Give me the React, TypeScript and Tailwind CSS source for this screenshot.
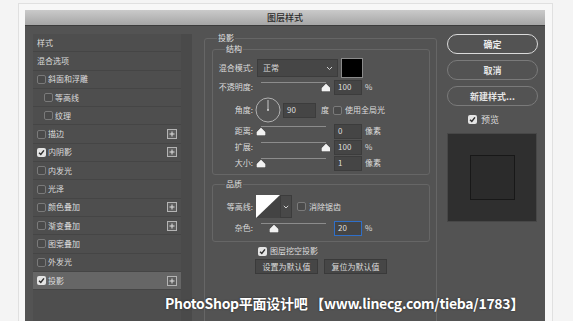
const font = { fontFamily: '"Noto Sans CJK SC", "Noto Sans", sans-serif' };

function Check({ on }: { on?: boolean }) {
  if (on) {
    return (
      <span className="w-[9px] h-[9px] rounded-[2px] bg-[#e4e4e4] flex items-center justify-center shrink-0">
        <svg width="7" height="7" viewBox="0 0 8 8">
          <path d="M1.2 4.2 L3.2 6.2 L6.8 1.6" stroke="#2e2e2e" strokeWidth="1.7" fill="none" />
        </svg>
      </span>
    );
  }
  return <span className="w-[9px] h-[9px] rounded-[2px] border border-[#7a7a7a] bg-[#4a4a4a] shrink-0" />;
}

function PlusBox() {
  return (
    <svg width="10" height="10" viewBox="0 0 10 10" className="shrink-0">
      <rect x="0.5" y="0.5" width="9" height="9" fill="#5e5e5e" stroke="#b4b4b4" />
      <path d="M5 2.5 V7.5 M2.5 5 H7.5" stroke="#e0e0e0" strokeWidth="1" />
    </svg>
  );
}

const layers: { name: string; check?: boolean; on?: boolean; sub?: boolean; plus?: boolean; sel?: boolean }[] = [
  { name: "样式" },
  { name: "混合选项" },
  { name: "斜面和浮雕", check: true },
  { name: "等高线", check: true, sub: true },
  { name: "纹理", check: true, sub: true },
  { name: "描边", check: true, plus: true },
  { name: "内阴影", check: true, on: true, plus: true },
  { name: "内发光", check: true },
  { name: "光泽", check: true },
  { name: "颜色叠加", check: true, plus: true },
  { name: "渐变叠加", check: true, plus: true },
  { name: "图案叠加", check: true },
  { name: "外发光", check: true },
  { name: "投影", check: true, on: true, plus: true, sel: true },
];

function Slider({ pos }: { pos: number }) {
  const cx = 5 + pos * 65;
  return (
    <svg width="74" height="16" viewBox="0 0 74 16" className="shrink-0 ml-[3px]">
      <line x1="5" y1="3.5" x2="70" y2="3.5" stroke="#8c8c8c" strokeWidth="1" />
      <path
        d={`M${cx - 4} 12 L${cx - 4} 9 L${cx} 5 L${cx + 4} 9 L${cx + 4} 12 Z`}
        fill="#f2f2f2"
        stroke="#f2f2f2"
        strokeWidth="0.6"
        strokeLinejoin="round"
      />
    </svg>
  );
}

function Num({ v, w = "w-[28px]", focus }: { v: string; w?: string; focus?: boolean }) {
  return (
    <div
      className={`${w} h-[15px] bg-[#454545] border ${
        focus ? "border-[#2f6fc9]" : "border-[#3c3c3c]"
      } flex items-center pl-[3px] text-[8px] text-[#dedede] shrink-0`}
    >
      {v}
    </div>
  );
}

function Label({ t }: { t: string }) {
  return <div className="w-[40px] text-right shrink-0">{t}</div>;
}

export default function App() {
  return (
    <div className="w-[573px] h-[321px] bg-[#f4f4f4] overflow-hidden relative" style={font}>
      <div className="ml-[18px] mt-[3px] w-[535px] h-[330px] border border-[#e0e0e0] bg-[#f7f7f7] pl-[6px] pt-[6px]">
        <div className="w-[520px]">
          {/* title bar */}
          <div className="h-[16px] bg-gradient-to-b from-[#cacaca] to-[#a6a6a6] flex items-center justify-center text-[9px] text-[#2a2a2a] font-medium border-b border-[#3c3c3c]">
            图层样式
          </div>

          {/* body */}
          <div className="h-[295px] bg-[#535353] flex text-[8px] text-[#dcdcdc] leading-none">
            {/* left list */}
            <div className="w-[168px] pl-[8px] pt-[8px] flex">
              <div className="w-[148px] bg-[#4e4e4e] flex flex-col">
                {layers.map((l) => (
                  <div
                    key={l.name}
                    className={`h-[18.3px] shrink-0 border-b border-[#454545] flex items-center pr-[4px] ${
                      l.sub ? "pl-[11px]" : "pl-[4px]"
                    } ${l.sel ? "bg-[#666666]" : ""}`}
                  >
                    {l.check && <Check on={l.on} />}
                    <span className={l.check ? "ml-[2px]" : ""}>{l.name}</span>
                    <span className="flex-1" />
                    {l.plus && <PlusBox />}
                  </div>
                ))}
              </div>
              <div className="w-[11px] bg-[#4a4a4a]" />
            </div>

            {/* middle settings */}
            <div className="w-[244px] pl-[11px]">
              <fieldset className="mt-[6px] w-[233px] h-[300px] border border-[#666] rounded-[3px] pl-[7px] pr-[6px]">
                <legend className="ml-[5px] leading-[12px] px-[1px] text-[#e0e0e0]">投影</legend>

                <fieldset className="w-[218px] border border-[#666] rounded-[3px] pb-[4px]">
                  <legend className="ml-[12px] leading-[10px] px-[1px] text-[#e0e0e0]">结构</legend>
                  <div className="pt-[4px] flex flex-col">
                    <div className="h-[20px] flex items-center">
                      <Label t="混合模式:" />
                      <div className="ml-[4px] w-[81px] h-[18px] bg-[#464646] border border-[#3c3c3c] flex items-center pl-[5px] pr-[4px]">
                        <span>正常</span>
                        <span className="flex-1" />
                        <svg width="7" height="5" viewBox="0 0 7 5">
                          <path d="M1 1 L3.5 3.5 L6 1" stroke="#cfcfcf" strokeWidth="1" fill="none" />
                        </svg>
                      </div>
                      <div className="ml-[3px] w-[22px] h-[20px] bg-black border border-[#8a8a8a]" />
                    </div>
                    <div className="h-[18px] flex items-center">
                      <Label t="不透明度:" />
                      <Slider pos={1} />
                      <div className="ml-[4px]"><Num v="100" /></div>
                      <span className="ml-[3px]">%</span>
                    </div>
                    <div className="h-[28px] flex items-center">
                      <Label t="角度:" />
                      <svg width="26" height="26" viewBox="0 0 26 26" className="ml-[2px] shrink-0">
                        <circle cx="13" cy="13" r="12" fill="none" stroke="#b0b0b0" strokeWidth="1" />
                        <line x1="13" y1="13" x2="13" y2="3" stroke="#c8c8c8" strokeWidth="1" />
                        <circle cx="13" cy="13" r="1" fill="#d0d0d0" />
                      </svg>
                      <div className="ml-[2px]"><Num v="90" w="w-[33px]" /></div>
                      <span className="ml-[5px]">度</span>
                      <span className="ml-[4px] flex"><Check /></span>
                      <span className="ml-[3px]">使用全局光</span>
                    </div>
                    <div className="h-[14px] flex items-center">
                      <Label t="距离:" />
                      <Slider pos={0} />
                      <div className="ml-[4px]"><Num v="0" /></div>
                      <span className="ml-[3px]">像素</span>
                    </div>
                    <div className="h-[18px] flex items-center">
                      <Label t="扩展:" />
                      <Slider pos={1} />
                      <div className="ml-[4px]"><Num v="100" /></div>
                      <span className="ml-[3px]">%</span>
                    </div>
                    <div className="h-[14px] flex items-center">
                      <Label t="大小:" />
                      <Slider pos={0} />
                      <div className="ml-[4px]"><Num v="1" /></div>
                      <span className="ml-[3px]">像素</span>
                    </div>
                  </div>
                </fieldset>

                <fieldset className="mt-[4px] w-[218px] border border-[#666] rounded-[3px] pb-[5px]">
                  <legend className="ml-[12px] leading-[10px] px-[1px] text-[#e0e0e0]">品质</legend>
                  <div className="pt-[6px] flex flex-col">
                    <div className="h-[23px] flex items-center">
                      <Label t="等高线:" />
                      <svg width="24" height="23" viewBox="0 0 24 23" className="ml-[3px] shrink-0">
                        <rect x="0" y="0" width="24" height="23" fill="#434343" />
                        <polygon points="0,0 24,0 0,23" fill="#ffffff" />
                      </svg>
                      <div className="w-[12px] h-[23px] bg-[#484848] border border-[#3c3c3c] flex items-center justify-center">
                        <svg width="6" height="4" viewBox="0 0 6 4">
                          <path d="M0.8 0.8 L3 3 L5.2 0.8" stroke="#cfcfcf" strokeWidth="1" fill="none" />
                        </svg>
                      </div>
                      <span className="ml-[5px] flex"><Check /></span>
                      <span className="ml-[3px]">消除锯齿</span>
                    </div>
                    <div className="mt-[2px] h-[16px] flex items-center">
                      <Label t="杂色:" />
                      <Slider pos={0.2} />
                      <div className="ml-[4px]"><Num v="20" focus /></div>
                      <span className="ml-[3px]">%</span>
                    </div>
                  </div>
                </fieldset>

                <div className="mt-[3px] h-[12px] flex items-center pl-[46px]">
                  <Check on />
                  <span className="ml-[3px]">图层挖空投影</span>
                </div>
                <div className="mt-[2px] flex justify-center gap-[6px]">
                  <div className="w-[63px] h-[15px] bg-[#464646] border border-[#3a3a3a] flex items-center justify-center">
                    设置为默认值
                  </div>
                  <div className="w-[63px] h-[15px] bg-[#464646] border border-[#3a3a3a] flex items-center justify-center">
                    复位为默认值
                  </div>
                </div>
              </fieldset>
            </div>

            {/* right buttons */}
            <div className="w-[108px] pl-[10px] pt-[8px] flex flex-col">
              <div className="w-[91px] h-[20px] rounded-full border-[1.5px] border-[#dadada] flex items-center justify-center text-[9px] font-bold text-[#ececec]">
                确定
              </div>
              <div className="mt-[6px] w-[91px] h-[20px] rounded-full border border-[#7a7a7a] flex items-center justify-center text-[9px] font-bold text-[#e4e4e4]">
                取消
              </div>
              <div className="mt-[6px] w-[91px] h-[20px] rounded-full border border-[#7a7a7a] flex items-center justify-center text-[9px] font-bold text-[#e4e4e4]">
                新建样式...
              </div>
              <div className="mt-[7px] h-[13px] flex items-center pl-[21px]">
                <Check on />
                <span className="ml-[4px] text-[9px]">预览</span>
              </div>
              <div className="mt-[7px] w-[90px] h-[89px] bg-[#2f2f2f] border border-[#474747] flex items-center justify-center">
                <div className="w-[45px] h-[45px] bg-[#2b2b2b] border border-[#181818]" />
              </div>
            </div>
          </div>
        </div>
      </div>

      {/* watermark */}
      <div className="absolute left-[165px] top-[293px] text-[14px] font-bold text-white whitespace-nowrap leading-[20px] tracking-[-0.3px] [text-shadow:0_0_2px_rgba(0,0,0,0.6)]">
        PhotoShop平面设计吧 【www.linecg.com/tieba/1783】
      </div>
    </div>
  );
}
